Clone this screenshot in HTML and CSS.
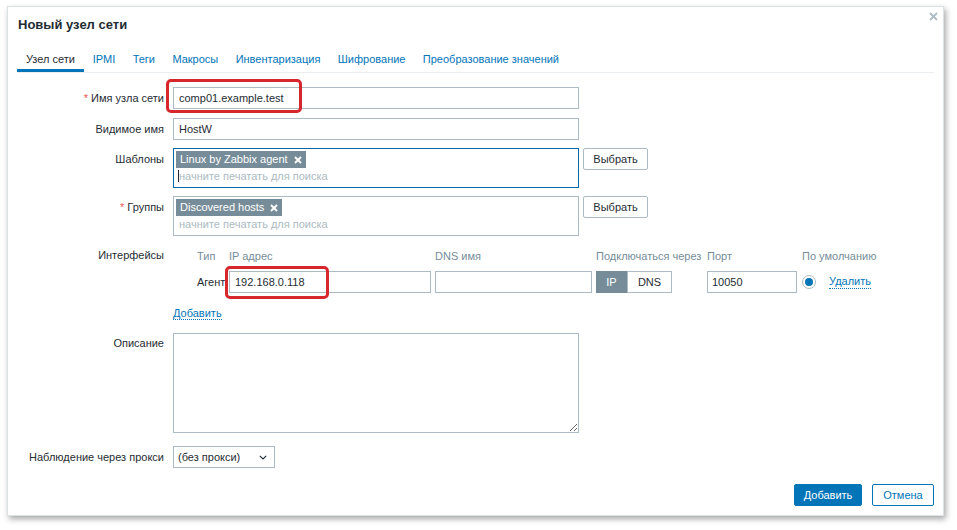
FILE: index.html
```html
<!DOCTYPE html>
<html lang="ru">
<head>
<meta charset="utf-8">
<title>Новый узел сети</title>
<link rel="stylesheet" href="styles.css">
</head>
<body>
<div class="dialog">
  <div class="dlg-head">
    <h1 class="dlg-title">Новый узел сети</h1>
    <button class="dlg-close" aria-label="Закрыть"><svg width="9" height="9" viewBox="0 0 9 9"><path d="M1 1L8 8M8 1L1 8" stroke="#aebcc4" stroke-width="1.8"/></svg></button>
  </div>
  <ul class="tabs">
    <li class="tab active">Узел сети</li>
    <li class="tab">IPMI</li>
    <li class="tab">Теги</li>
    <li class="tab">Макросы</li>
    <li class="tab">Инвентаризация</li>
    <li class="tab">Шифрование</li>
    <li class="tab">Преобразование значений</li>
  </ul>
  <div class="form">
    <label class="lbl"><span class="req">*</span> Имя узла сети</label>
    <div class="field"><div class="input wide">comp01.example.test</div></div>

    <label class="lbl">Видимое имя</label>
    <div class="field"><div class="input wide">HostW</div></div>

    <label class="lbl up">Шаблоны</label>
    <div class="field row up">
      <div class="multi focused">
        <div class="tags"><span class="tag">Linux by Zabbix agent <svg class="x" width="8" height="8" viewBox="0 0 8 8"><path d="M1 1L7 7M7 1L1 7" stroke="#fff" stroke-width="1.9"/></svg></span></div>
        <div class="ph"><span class="caret"></span>начните печатать для поиска</div>
      </div>
      <button class="btn-grey">Выбрать</button>
    </div>

    <label class="lbl up"><span class="req">*</span> Группы</label>
    <div class="field row up">
      <div class="multi">
        <div class="tags"><span class="tag">Discovered hosts <svg class="x" width="8" height="8" viewBox="0 0 8 8"><path d="M1 1L7 7M7 1L1 7" stroke="#fff" stroke-width="1.9"/></svg></span></div>
        <div class="ph">начните печатать для поиска</div>
      </div>
      <button class="btn-grey">Выбрать</button>
    </div>

    <label class="lbl lbl-if">Интерфейсы</label>
    <div class="field">
      <div class="iface">
        <span></span><span class="hd">Тип</span><span class="hd">IP адрес</span><span class="hd">DNS имя</span><span class="hd">Подключаться через</span><span class="hd">Порт</span><span class="hd">По умолчанию</span>
        <span></span><span class="type">Агент</span>
        <span><div class="input ip">192.168.0.118</div></span>
        <span><div class="input dns"></div></span>
        <span class="toggle"><span class="seg on">IP</span><span class="seg">DNS</span></span>
        <span><div class="input port">10050</div></span>
        <span class="def"><span class="radio"><span class="dot"></span></span><a class="link">Удалить</a></span>
      </div>
      <div class="addrow"><a class="link">Добавить</a></div>
    </div>

    <label class="lbl lbl-ta">Описание</label>
    <div class="field"><textarea class="ta"></textarea></div>

    <label class="lbl lbl-proxy">Наблюдение через прокси</label>
    <div class="field"><div class="select">(без прокси)<svg width="8" height="5" viewBox="0 0 8 5"><path d="M0.8 0.8L4 4L7.2 0.8" fill="none" stroke="#1f2c33" stroke-width="1.1"/></svg></div></div>
  </div>
  <div class="dlg-foot">
    <button class="btn-main">Добавить</button>
    <button class="btn-alt">Отмена</button>
  </div>
</div>
<div class="mark mark1"></div>
<div class="mark mark2"></div>
</body>
</html>
```

FILE: styles.css
```css
html, body { margin: 0; padding: 0; background: #fff; }
body {
  font-family: "Liberation Sans", Arial, sans-serif;
  font-size: 11px;
  color: #1f2c33;
  width: 957px;
  height: 530px;
  overflow: hidden;
  position: relative;
}
.dialog {
  margin: 6px 0 0 7px;
  width: 937px;
  height: 510px;
  box-sizing: border-box;
  border: 1px solid #dce1e4;
  box-shadow: 2px 3px 6px rgba(0,0,0,0.35);
  padding: 0 9px;
  display: flex;
  flex-direction: column;
  position: relative;
  background: #fff;
}
.dlg-head { height: 39px; position: relative; }
.dlg-title {
  margin: 0 0 0 1px;
  padding-top: 10px;
  font-size: 13px;
  line-height: 16px;
  font-weight: bold;
  color: #1f2c33;
}
.dlg-close {
  position: absolute;
  right: -4px;
  top: 5px;
  border: 0;
  background: none;
  padding: 0;
  width: 9px;
  height: 9px;
  line-height: 0;
}
.tabs {
  list-style: none;
  margin: 0;
  padding: 0;
  display: flex;
  border-bottom: 1px solid #ebeef0;
}
.tab {
  padding: 7px 8.7px 3px;
  line-height: 13px;
  color: #0275b8;
  border-bottom: 3px solid transparent;
}
.tab.active { color: #1f2c33; border-bottom-color: #0275b8; padding-left: 9px; padding-right: 9px; }
.form {
  display: grid;
  grid-template-columns: 147px 1fr;
  column-gap: 9px;
  row-gap: 9px;
  padding-top: 14px;
}
.lbl { text-align: right; line-height: 22px; white-space: nowrap; }
.up { margin-top: -1px; }
.lbl-if { line-height: 18px; padding-top: 1px; }
.lbl-ta { padding-top: 1px; }
.lbl-proxy { padding-top: 4px; }
.req { color: #e45959; }
.field { min-width: 0; }
.row { display: flex; align-items: flex-start; gap: 4px; }
.input {
  box-sizing: border-box;
  height: 22px;
  border: 1px solid #acbbc2;
  padding: 0 5px;
  line-height: 20px;
  background: #fff;
  white-space: nowrap;
}
.wide { width: 406px; }
.multi {
  box-sizing: border-box;
  width: 406px;
  height: 40px;
  border: 1px solid #acbbc2;
  padding: 2px 2px 0;
}
.multi.focused { border-color: #0b67a3; }
.tags { height: 18px; }
.tag {
  display: inline-flex;
  align-items: center;
  background: #768d99;
  color: #fff;
  line-height: 17px;
  height: 17px;
  padding: 0 4px;
}
.tag .x { margin-left: 6px; }
.ph { color: #acbbc2; line-height: 15px; padding-left: 3px; position: relative; }
.caret {
  display: inline-block;
  width: 1px;
  height: 12px;
  background: #1f2c33;
  vertical-align: -2px;
  margin-left: -1px;
}
.btn-grey {
  box-sizing: border-box;
  height: 22px;
  width: 65px;
  border: 1px solid #acbbc2;
  border-radius: 2px;
  background: #fff;
  color: #1f2c33;
  font: inherit;
  padding: 0;
}
.iface {
  display: grid;
  grid-template-columns: 24px 32px 206px 161px 111px 95px 120px;
  grid-template-rows: 18px 22px;
  row-gap: 6px;
  align-items: center;
  padding-top: 2px;
}
.hd { color: #768d99; white-space: nowrap; line-height: 18px; }
.type { line-height: 22px; }
.ip { width: 202px; }
.dns { width: 157px; }
.port { width: 90px; padding-left: 4px; }
.toggle { display: flex; height: 22px; }
.seg {
  box-sizing: border-box;
  height: 22px;
  line-height: 20px;
  border: 1px solid #acbbc2;
  text-align: center;
  width: 45px;
  background: #fff;
}
.seg.on { width: 31px; background: #768d99; border-color: #768d99; color: #fff; }
.def { display: flex; align-items: center; gap: 13px; }
.radio {
  box-sizing: border-box;
  width: 14px;
  height: 14px;
  border: 1px solid #acbbc2;
  border-radius: 50%;
  display: flex;
  align-items: center;
  justify-content: center;
}
.dot { width: 8px; height: 8px; border-radius: 50%; background: #0275b8; }
.link {
  color: #0275b8;
  border-bottom: 1px dotted #0275b8;
  line-height: 13px;
  cursor: pointer;
}
.addrow { padding-top: 14px; line-height: 13px; height: 15px; }
.addrow .link { display: inline-block; line-height: 12px; }
.ta {
  display: block;
  box-sizing: border-box;
  width: 406px;
  height: 100px;
  border: 1px solid #acbbc2;
  margin: 2px 0 0;
  padding: 4px;
  font: inherit;
  resize: both;
}
.select {
  box-sizing: border-box;
  width: 102px;
  height: 22px;
  border: 1px solid #acbbc2;
  padding: 0 7px 0 4px;
  line-height: 20px;
  display: flex;
  justify-content: space-between;
  align-items: center;
  margin-top: 4px;
}
.dlg-foot {
  margin-top: auto;
  display: flex;
  justify-content: flex-end;
  gap: 10px;
  padding-bottom: 9px;
}
.btn-main, .btn-alt {
  box-sizing: border-box;
  height: 22px;
  font: inherit;
  font-size: 11px;
  border-radius: 2px;
  padding: 0;
}
.btn-main { width: 68px; background: #0275b8; border: 1px solid #0275b8; color: #fff; }
.btn-alt { width: 62px; background: #fff; border: 1px solid #0275b8; color: #0275b8; }
.mark {
  position: absolute;
  border: 3px solid #d6272d;
  border-radius: 5px;
  box-sizing: border-box;
}
.mark1 { left: 166px; top: 79px; width: 136px; height: 34px; }
.mark2 { left: 225px; top: 266px; width: 104px; height: 33px; }
```
